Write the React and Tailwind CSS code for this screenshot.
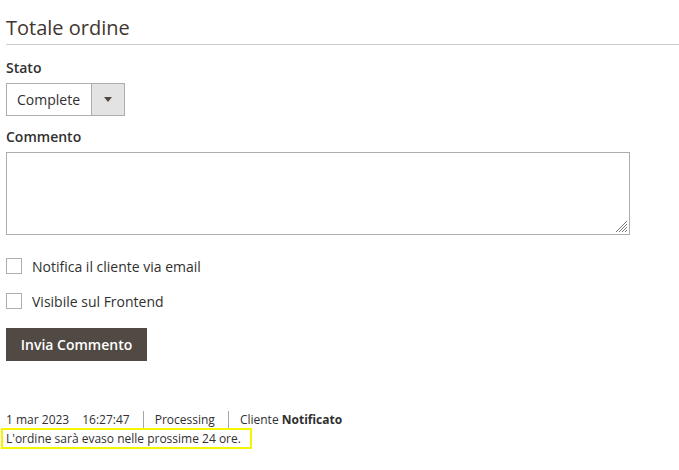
import { useState } from 'react';

function Checkbox({ label, checked, onChange }) {
  return (
    <label className="flex items-center h-[16px] cursor-pointer">
      <span
        className={`w-[16px] h-[16px] border border-[#adadad] bg-white flex items-center justify-center text-[11px] ${
          checked ? 'text-[#514943]' : 'text-transparent'
        }`}
        onClick={onChange}
      >
        ✓
      </span>
      <span className="ml-[10px] text-[14px] text-[#303030]">{label}</span>
    </label>
  );
}

export default function App() {
  const [notify, setNotify] = useState(false);
  const [visible, setVisible] = useState(false);

  return (
    <div className="w-[679px] h-[470px] bg-white overflow-hidden font-['Open_Sans',sans-serif] text-[#303030]">
      <div className="pl-[6px]">
        <div className="pt-[14px] pb-[2px] border-b border-[#cccccc]">
          <h2 className="text-[20px] leading-[28px] text-[#41362f] font-normal">Totale ordine</h2>
        </div>

        <div className="mt-[13px] text-[14px] leading-[20px] font-semibold">Stato</div>
        <div className="mt-[5px] flex w-[119px] h-[33px] border border-[#adadad] bg-white">
          <div className="flex-1 flex items-center pl-[10px] text-[14px]">Complete</div>
          <div className="w-[33px] h-full bg-[#e3e3e3] border-l border-[#adadad] flex items-center justify-center">
            <svg width="8" height="5" viewBox="0 0 8 5">
              <path d="M0 0 L8 0 L4 5 Z" fill="#514943" />
            </svg>
          </div>
        </div>

        <div className="mt-[11px] text-[14px] leading-[20px] font-semibold">Commento</div>
        <div className="mt-[5px] relative w-[624px] h-[83px] border border-[#adadad] bg-white">
          <svg className="absolute right-[1px] bottom-[1px]" width="14" height="14" viewBox="0 0 14 14">
            <path d="M13 2 L2 13 M13 5 L5 13 M13 8 L8 13 M13 11 L11 13" stroke="#777" strokeWidth="1" />
          </svg>
        </div>

        <div className="mt-[23px] flex flex-col gap-[19px]">
          <Checkbox label="Notifica il cliente via email" checked={notify} onChange={() => setNotify(!notify)} />
          <Checkbox label="Visibile sul Frontend" checked={visible} onChange={() => setVisible(!visible)} />
        </div>

        <button className="mt-[19px] w-[141px] h-[33px] bg-[#514943] text-white text-[14px] font-semibold">
          Invia Commento
        </button>

        <div className="mt-[50px] flex items-center text-[12px] leading-[17px]">
          <span>1 mar 2023</span>
          <span className="ml-[13px]">16:27:47</span>
          <span className="ml-[13px] border-l border-[#a6a6a6] pl-[11px] h-[17px]">Processing</span>
          <span className="ml-[13px] border-l border-[#a6a6a6] pl-[11px] h-[17px]">
            Cliente <span className="font-bold">Notificato</span>
          </span>
        </div>
      </div>
      <div className="ml-[1px] w-[251px] border-2 border-[#f5f500] pl-[3px] text-[12px] leading-[17px]">
        L'ordine sarà evaso nelle prossime 24 ore.
      </div>
    </div>
  );
}
